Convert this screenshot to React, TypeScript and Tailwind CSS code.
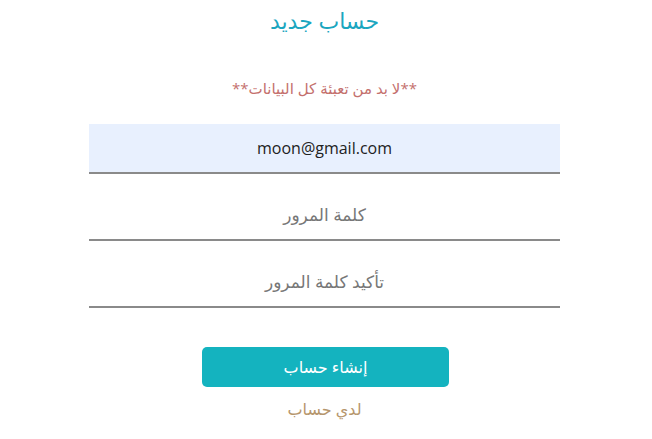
export default function App() {
  return (
    <div
      dir="rtl"
      className="min-h-[439px] w-full bg-white pr-[3px]"
      style={{ fontFamily: '"Open Sans", "DejaVu Sans", sans-serif' }}
    >
      <div className="mx-auto flex w-[471px] flex-col items-center">
        <h1 className="mt-[6px] h-[28px] text-[22px] leading-[28px] text-[#1ba6bf]">حساب جديد</h1>
        <p className="mt-[44px] h-[20px] text-[15px] leading-[20px] text-[#c4706d]">**لا بد من تعبئة كل البيانات**</p>
        <form className="mt-[26px] flex w-full flex-col gap-[17px]">
          <Field value="moon@gmail.com" filled />
          <Field placeholder="كلمة المرور" />
          <Field placeholder="تأكيد كلمة المرور" />
          <button
            type="button"
            className="mx-auto mt-[22px] h-[40px] w-[247px] translate-x-[1px] rounded-[5px] bg-[#14b3bf] text-[16px] text-white"
          >
            إنشاء حساب
          </button>
        </form>
        <a className="mt-[11px] text-[16px] leading-[22px] text-[#b6966c]">لدي حساب</a>
      </div>
    </div>
  );
}

function Field({ value, placeholder, filled }: { value?: string; placeholder?: string; filled?: boolean }) {
  return (
    <input
      readOnly
      defaultValue={value}
      placeholder={placeholder}
      dir={value ? "ltr" : "rtl"}
      className={`h-[50px] w-full border-b-2 border-[#8a8a8a] text-center text-[16px] text-[#222] outline-none placeholder:text-[17px] placeholder:text-[#777] ${
        filled ? "bg-[#e8f0fe]" : "bg-white"
      }`}
    />
  );
}
